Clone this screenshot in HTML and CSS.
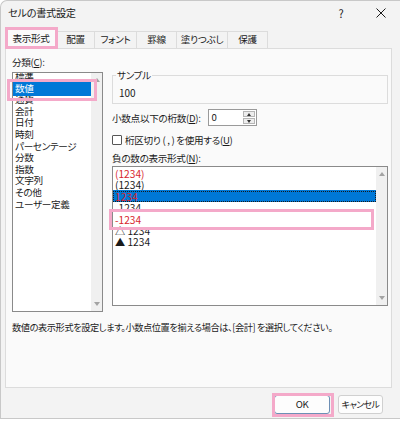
FILE: index.html
```html
<!DOCTYPE html>
<html lang="ja">
  <head>
    <meta charset="UTF-8" />
    <title>セルの書式設定</title>
    <link rel="stylesheet" href="styles.css">
  </head>
  <body>
    <div class="dialog">
      <div class="titlebar">
        <div class="title">セルの書式設定</div>
        <div class="help">?</div>
        <div class="close">
          <svg width="10" height="10" viewBox="0 0 10 10"><path d="M0.5 0.5L9.5 9.5M9.5 0.5L0.5 9.5" stroke="#1a1a1a" stroke-width="1"/></svg>
        </div>
      </div>
      <div class="tabs">
        <div class="tab active">表示形式</div>
        <div class="tab w38">配置</div>
        <div class="tab w42">フォント</div>
        <div class="tab w40">罫線</div>
        <div class="tab w51">塗りつぶし</div>
        <div class="tab w40">保護</div>
      </div>
      <div class="page">
        <div class="cols">
          <div class="left">
            <div class="label">分類(<u>C</u>):</div>
            <div class="listbox cat">
              <ul class="items">
                <li>標準</li>
                <li class="sel">数値</li>
                <li>通貨</li>
                <li>会計</li>
                <li>日付</li>
                <li>時刻</li>
                <li>パーセンテージ</li>
                <li>分数</li>
                <li>指数</li>
                <li>文字列</li>
                <li>その他</li>
                <li>ユーザー定義</li>
              </ul>
              <div class="sbar"><span class="up"></span><span class="down"></span></div>
            </div>
          </div>
          <div class="right">
            <fieldset class="sample">
              <legend>サンプル</legend>
              <div>100</div>
            </fieldset>
            <div class="row decimals">
              <span>小数点以下の桁数(<u>D</u>):</span>
              <div class="spin">
                <span class="val">0</span>
                <div class="spinbtns">
                  <span class="sup"></span>
                  <span class="sdown"></span>
                </div>
              </div>
            </div>
            <div class="row check">
              <span class="box"></span>
              <span>桁区切り ( , ) を使用する(<u>U</u>)</span>
            </div>
            <div class="label neg-label">負の数の表示形式(<u>N</u>):</div>
            <div class="listbox neg">
              <ul class="items">
                <li class="red">(1234)</li>
                <li>(1234)</li>
                <li class="sel red">1234</li>
                <li>-1234</li>
                <li class="red">-1234</li>
                <li>△ 1234</li>
                <li>▲ 1234</li>
              </ul>
              <div class="sbar"><span class="up"></span><span class="down"></span></div>
            </div>
          </div>
        </div>
        <div class="desc">数値の表示形式を設定します。小数点位置を揃える場合は、[会計] を選択してください。</div>
      </div>
      <div class="footer">
        <div class="button ok">OK</div>
        <div class="button cancel">キャンセル</div>
      </div>

      <!-- pink markers -->
      <div class="mark m-tab"></div>
      <div class="mark m-cat"></div>
      <div class="mark m-neg"></div>
      <div class="mark m-ok"></div>
    </div>
  </body>
</html>
```

FILE: styles.css
```css
* {
  box-sizing: border-box;
  font-family: "Noto Sans CJK JP", "Noto Sans", sans-serif;
  font-feature-settings: "palt";
}
body {
  margin: 0;
  background-color: #ffffff;
  overflow: hidden;
}
.dialog {
  position: relative;
  width: 400px;
  height: 419px;
  background-color: #f3f3f3;
  border-top: 1px solid #c8c8c8;
  border-left: 1px solid #c8c8c8;
  border-bottom: 1px solid #c8c8c8;
  border-top-left-radius: 7px;
  color: #1a1a1a;
  font-size: 9.6px;
  letter-spacing: -0.3px;
}
.titlebar {
  display: flex;
  align-items: center;
  height: 24px;
  padding-left: 7px;
}
.title {
  flex: 1;
  font-size: 10.2px;
  line-height: 12px;
}
.help {
  width: 20px;
  font-size: 11px;
  text-align: center;
  line-height: 12px;
  margin-right: 15px;
}
.close {
  width: 30px;
  padding-left: 10px;
  display: flex;
  margin-right: 4px;
}
.tabs {
  display: flex;
  align-items: flex-end;
  height: 23px;
  padding-left: 4px;
}
.tab {
  height: 17px;
  line-height: 15px;
  text-align: center;
  border: 1px solid #dcdcdc;
  border-bottom: none;
  margin-left: -1px;
  white-space: nowrap;
}
.tab.active {
  width: 52px;
  height: 22px;
  line-height: 21px;
  background-color: #fafafa;
  margin-left: 0;
  margin-bottom: -1px;
  position: relative;
  z-index: 1;
}
.w38 { width: 39px; }
.w42 { width: 43px; }
.w40 { width: 41px; }
.w51 { width: 52px; }
.page {
  width: 387px;
  height: 340px;
  margin-left: 4px;
  background-color: #fafafa;
  border: 1px solid #dcdcdc;
  padding-left: 6px;
}
.cols {
  display: flex;
  align-items: flex-start;
  gap: 9px;
}
.left {
  width: 91px;
}
.label {
  line-height: 12px;
  white-space: nowrap;
}
.left .label {
  margin-top: 7px;
  margin-bottom: 4px;
}
.listbox {
  position: relative;
  background-color: #ffffff;
  border: 1px solid #8a8a8a;
  overflow: hidden;
}
.cat {
  height: 240px;
}
.items {
  list-style-type: none;
  margin: 0;
  padding: 0;
  margin-right: 11px;
}
.items li {
  height: 11.6px;
  line-height: 11.6px;
  padding-left: 2px;
  white-space: nowrap;
}
.cat .items {
  margin-top: -2px;
}
.items li.sel {
  background-color: #0078d7;
  color: #ffffff;
  box-shadow: 0 -1px 0 #0078d7, 0 2px 0 #0078d7;
  position: relative;
}
.neg .items {
  padding-top: 1px;
  font-size: 10.2px;
  letter-spacing: 0;
}
.neg .items li {
  height: 11.4px;
  line-height: 11.4px;
}
.neg .items li.sel {
  color: #d8262e;
  outline: 1px dotted #1a1a1a;
  outline-offset: -1px;
  box-shadow: 0 -1px 0 #0078d7;
}
.sbar {
  position: absolute;
  top: 0;
  right: 0;
  bottom: 0;
  width: 11px;
  background-color: #f0f0f0;
}
.up,
.down {
  position: absolute;
  left: 3px;
  width: 0;
  height: 0;
  border-left: 3px solid transparent;
  border-right: 3px solid transparent;
}
.up {
  top: 5px;
  border-bottom: 4px solid #a3a3a3;
}
.down {
  bottom: 5px;
  border-top: 4px solid #a3a3a3;
}
.right {
  width: 276px;
}
.sample {
  margin: 20px 0 0 0;
  padding: 6px 6px 3px 6px;
  border: 1px solid #dcdcdc;
  height: 35px;
}
.sample legend {
  padding: 0 1px;
  margin-left: -3px;
  line-height: 12px;
}
.sample div {
  line-height: 12px;
  font-size: 10px;
  letter-spacing: 0;
}
.row {
  display: flex;
  align-items: center;
  white-space: nowrap;
}
.decimals {
  margin-top: 5px;
  height: 17px;
}
.spin {
  display: flex;
  width: 49px;
  height: 17px;
  margin-left: 7px;
  background-color: #ffffff;
  border: 1px solid #9a9a9a;
}
.spin .val {
  flex: 1;
  line-height: 15px;
  padding-left: 3px;
}
.spinbtns {
  width: 12px;
  margin: 1px;
  display: flex;
  flex-direction: column;
  gap: 1px;
}
.sup,
.sdown {
  flex: 1;
  background-color: #ededed;
  border: 1px solid #b5b5b5;
  display: flex;
  align-items: center;
  justify-content: center;
}
.sup::after,
.sdown::after {
  content: "";
  border-left: 2.5px solid transparent;
  border-right: 2.5px solid transparent;
}
.sup::after {
  border-bottom: 3px solid #333;
}
.sdown::after {
  border-top: 3px solid #333;
}
.check {
  margin-top: 8px;
  height: 12px;
  gap: 3px;
}
.box {
  width: 10px;
  height: 10px;
  border: 1px solid #555;
  border-radius: 1px;
  background-color: #ffffff;
}
.neg-label {
  margin-top: 6px;
}
.neg {
  margin-top: 2px;
  height: 140px;
}
.red {
  color: #d8262e;
}
.desc {
  margin-top: 9px;
  line-height: 12px;
  font-size: 9.2px;
  letter-spacing: -0.4px;
  white-space: nowrap;
}
.footer {
  display: flex;
  justify-content: flex-end;
  gap: 8px;
  padding-top: 7px;
  padding-right: 17px;
}
.button {
  height: 19px;
  line-height: 17px;
  text-align: center;
  background-color: #fdfdfd;
  border: 1px solid #d0d0d0;
  border-radius: 3px;
  white-space: nowrap;
}
.button.ok {
  width: 56px;
  border-color: #6d8fb5;
}
.button.cancel {
  width: 45px;
  font-size: 9px;
  letter-spacing: -0.6px;
}
.mark {
  position: absolute;
  border: 3px solid #f4a9c9;
  z-index: 2;
}
.m-tab {
  left: 4px;
  top: 26px;
  width: 53px;
  height: 22px;
}
.m-cat {
  left: 6px;
  top: 78px;
  width: 90px;
  height: 22px;
}
.m-neg {
  left: 108px;
  top: 208px;
  width: 265px;
  height: 21px;
}
.m-ok {
  left: 271px;
  top: 392px;
  width: 62px;
  height: 24px;
}
```
